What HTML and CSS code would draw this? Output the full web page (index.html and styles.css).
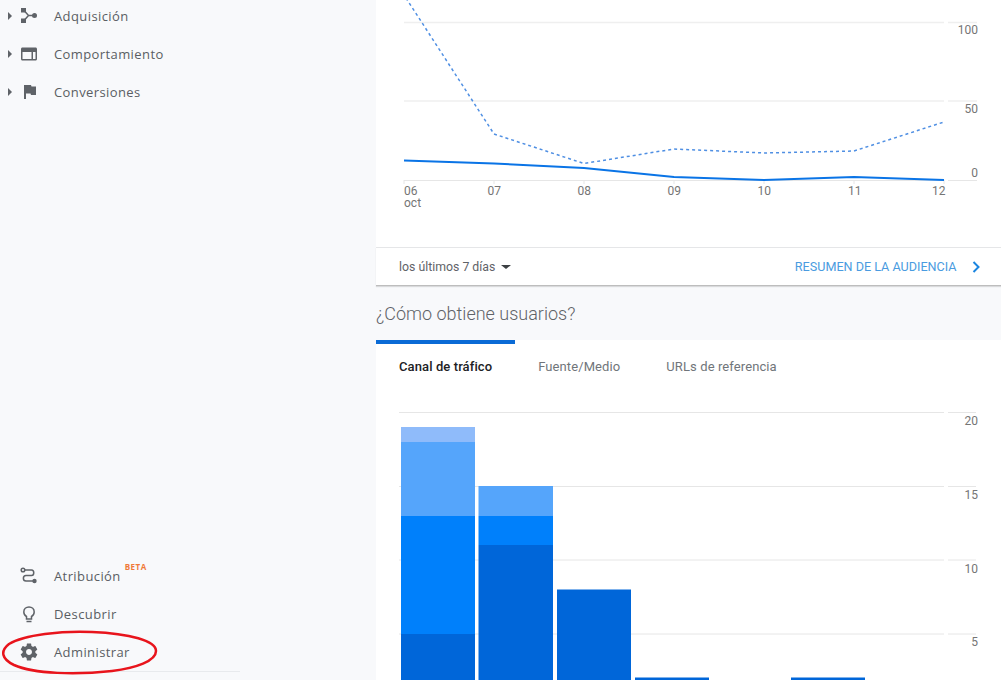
FILE: index.html
```html
<!DOCTYPE html>
<html lang="es">

<head>
    <meta charset="UTF-8">
    <title>Analytics</title>
    <link rel="stylesheet" href="styles.css">
</head>

<body>
    <aside class="sidebar">
        <nav class="nav-group nav-top">
            <a class="nav-item">
                <span class="caret"></span>
                <svg class="nav-icon" viewBox="0 0 24 24">
                    <rect x="4" y="4" width="5" height="4.500" />
                    <rect x="4" y="14.500" width="5" height="4.500" />
                    <circle cx="17.500" cy="11.500" r="2.500" />
                    <path class="line thin" d="M7.500 7l4 4.500H17M11.500 11.500l-4 4.500" />
                </svg>
                <span>Adquisición</span>
            </a>
            <a class="nav-item">
                <span class="caret"></span>
                <svg class="nav-icon" viewBox="0 0 24 24">
                    <path fill-rule="evenodd" d="M5.500 5.500h13c.9 0 1.500.6 1.500 1.500v10c0 .9-.6 1.500-1.500 1.500h-13c-.9 0-1.500-.6-1.500-1.500V7c0-.9.6-1.500 1.500-1.500zm0 4.500v7h9v-7h-9zm10.500 0v7h2.500v-7H16z" />
                </svg>
                <span>Comportamiento</span>
            </a>
            <a class="nav-item">
                <span class="caret"></span>
                <svg class="nav-icon" viewBox="0 0 24 24">
                    <path d="M7 5h7l.5 1.500H19V15h-5l-.5-1.500H9V19H7z" />
                </svg>
                <span>Conversiones</span>
            </a>
        </nav>

        <nav class="nav-group nav-bottom">
            <a class="nav-item">
                <svg class="nav-icon" viewBox="0 0 24 24">
                    <circle class="line thin" cx="6" cy="6" r="1.800" />
                    <circle cx="17.500" cy="17" r="2.200" />
                    <path class="line thin" d="M8 6h6.500c3 0 3 5.500 0 5.500H9c-3.500 0-3.500 5.500 0 5.500h7" />
                </svg>
                <span>Atribución</span>
                <sup class="beta">BETA</sup>
            </a>
            <a class="nav-item">
                <svg class="nav-icon" viewBox="0 0 24 24">
                    <path class="line thin" d="M9.500 14.500C7.500 13.300 6.800 11.500 6.800 10c0-3 2.300-5 5.200-5s5.200 2 5.200 5c0 1.500-.7 3.300-2.700 4.500V17h-5z" />
                    <path class="line thin" d="M9.500 19.500h5" />
                </svg>
                <span>Descubrir</span>
            </a>
            <a class="nav-item">
                <svg class="nav-icon" viewBox="0 0 24 24">
                    <path transform="translate(1.800 1.800) scale(.85)" d="M19.430 12.980c.04-.32.07-.64.07-.98s-.03-.66-.07-.98l2.110-1.650c.19-.15.24-.42.12-.64l-2-3.460c-.12-.22-.39-.3-.61-.22l-2.490 1c-.52-.4-1.080-.73-1.690-.98l-.38-2.650C14.460 2.180 14.250 2 14 2h-4c-.25 0-.46.18-.49.42l-.38 2.650c-.61.25-1.170.59-1.690.98l-2.490-1c-.23-.09-.49 0-.61.22l-2 3.460c-.13.22-.07.49.12.64l2.110 1.650c-.04.32-.07.65-.07.98s.03.66.07.98l-2.110 1.650c-.19.15-.24.42-.12.64l2 3.460c.12.22.39.3.61.22l2.490-1c.52.4 1.080.73 1.690.98l.38 2.650c.03.24.24.42.49.42h4c.25 0 .46-.18.49-.42l.38-2.650c.61-.25 1.170-.59 1.690-.98l2.490 1c.23.09.49 0 .61-.22l2-3.460c.12-.22.07-.49-.12-.64l-2.110-1.650zM12 15.500c-1.930 0-3.500-1.570-3.500-3.500s1.570-3.500 3.500-3.500 3.500 1.570 3.500 3.500-1.570 3.500-3.500 3.500z" />
                </svg>
                <span>Administrar</span>
            </a>
        </nav>

        <!-- red circle somebody drew over the screenshot -->
        <svg class="scribble" viewBox="0 0 158 46">
            <path d="M92 2C62 0.500 24 5 9 14 0 21 1.500 29 14 35c20 9 62 10 98 6 24-3 44-10 44-20C156 11 130 3.500 92 2z" />
        </svg>
    </aside>

    <main class="content">
        <section class="card">
            <svg class="line-chart" viewBox="0 0 624 247">
                <g class="grid soft">
                    <path d="M28 22.500H568M572 22.500H601" />
                    <path d="M28 101H568M572 101H601" />
                </g>
                <g class="grid">
                    <path d="M28 180.500H568M572 180.500H601" />
                    <path d="M28 180V184M118 180V184M208 180V184M298 180V184M388 180V184M478 180V184M568 180V184" />
                </g>
                <polyline class="dotted" points="30,-2 118,134 208,163.500 298,149 388,153 478,151 568,122" />
                <polyline class="solid" points="28,160.500 118,163.500 208,168 298,177 388,180 478,177 568,180" />
                <g class="axis-y">
                    <text x="602" y="34">100</text>
                    <text x="602" y="113">50</text>
                    <text x="602" y="177">0</text>
                </g>
                <g class="axis-x">
                    <text x="28" y="195">06</text>
                    <text x="28" y="207">oct</text>
                    <text x="111.500" y="195">07</text>
                    <text x="201.500" y="195">08</text>
                    <text x="291.500" y="195">09</text>
                    <text x="381.500" y="195">10</text>
                    <text x="472" y="195">11</text>
                    <text x="556" y="195">12</text>
                </g>
            </svg>
            <div class="card-footer">
                <span class="range">los últimos 7 días<i class="range-caret"></i></span>
                <a class="report-link">RESUMEN DE LA AUDIENCIA
                    <svg class="chevron" viewBox="0 0 8 12">
                        <path d="M1.500 1l5 5-5 5" />
                    </svg>
                </a>
            </div>
        </section>

        <h2 class="section-title">¿Cómo obtiene usuarios?</h2>

        <section class="card">
            <div class="tabs">
                <a class="tab active">Canal de tráfico</a>
                <a class="tab">Fuente/Medio</a>
                <a class="tab">URLs de referencia</a>
            </div>
            <svg class="bar-chart" viewBox="0 0 624 296">
                <g class="grid">
                    <path d="M23 28.500H568M572 28.500H600" />
                    <path d="M23 102.500H568M572 102.500H600" />
                    <path d="M23 176H568M572 176H600" />
                    <path d="M23 250H568M572 250H600" />
                </g>
                <rect class="s4" x="25" y="43" width="74" height="15" />
                <rect class="s3" x="25" y="58" width="74" height="74" />
                <rect class="s2" x="25" y="132" width="74" height="118" />
                <rect class="s1" x="25" y="250" width="74" height="46" />

                <rect class="s3" x="102.500" y="102" width="74.500" height="30" />
                <rect class="s2" x="102.500" y="132" width="74.500" height="29" />
                <rect class="s1" x="102.500" y="161" width="74.500" height="135" />

                <rect class="s1" x="181" y="205.500" width="74" height="90.500" />
                <rect class="s1" x="259" y="293.500" width="74" height="3" />
                <rect class="s1" x="415" y="293.500" width="74" height="3" />
                <g class="axis-y">
                    <text x="602" y="40.500">20</text>
                    <text x="602" y="114.500">15</text>
                    <text x="602" y="188.500">10</text>
                    <text x="602" y="261.500">5</text>
                </g>
            </svg>
        </section>
    </main>
</body>

</html>
```

FILE: styles.css
```css
html,
body {
    height: 680px;
    margin: 0;
    overflow: hidden;
}

body {
    display: flex;
    background-color: #f8f9fb;
    font-family: Roboto, "Liberation Sans", sans-serif;
}

a {
    color: inherit;
    text-decoration: none;
}

.sidebar {
    position: relative;
    display: flex;
    flex-direction: column;
    justify-content: space-between;
    flex: 0 0 376px;
    height: 680px;
    font-family: "Open Sans", sans-serif;
}

.nav-group {
    width: 240px;
}

.nav-top {
    margin-top: -3px;
}

.nav-bottom {
    margin-bottom: 8px;
    border-bottom: 1px solid #e8eaed;
}

.nav-item {
    display: flex;
    align-items: center;
    height: 38px;
    padding-left: 17px;
    font-size: 13px;
    font-weight: 500;
    letter-spacing: 0.4px;
    line-height: 36px;
    color: #5a5e63;
}

.caret {
    width: 0;
    height: 0;
    margin-left: -9px;
    margin-right: 5px;
    border-top: 4px solid transparent;
    border-bottom: 4px solid transparent;
    border-left: 4px solid #5f6368;
}

.nav-icon {
    flex: none;
    width: 24px;
    height: 24px;
    margin-right: 13px;
    fill: #5f6368;
}

.line {
    fill: none;
    stroke: #5f6368;
    stroke-width: 2;
}

.line.thin {
    stroke-width: 1.5;
}

.beta {
    align-self: flex-start;
    margin: 5px 0 0 4px;
    font-size: 8px;
    font-weight: 700;
    letter-spacing: 0.5px;
    line-height: 10px;
    color: #f07a3a;
}

.scribble {
    position: absolute;
    left: 0;
    top: 630px;
    width: 158px;
    height: 46px;
    fill: none;
    stroke: #e8141c;
    stroke-width: 2.5;
}

.content {
    flex: 1;
    min-width: 0;
}

.card {
    background-color: #fff;
}

.line-chart,
.bar-chart {
    display: block;
    width: 624px;
}

.line-chart {
    height: 247px;
}

.bar-chart {
    height: 296px;
}

.grid path {
    fill: none;
    stroke: #e6e6e6;
    stroke-width: 1;
}

.grid.soft path {
    stroke: #efefef;
    stroke-width: 1.5;
}

.dotted {
    fill: none;
    stroke: #4f8fe3;
    stroke-width: 1.5;
    stroke-dasharray: 3 3;
}

.solid {
    fill: none;
    stroke: #0a74e6;
    stroke-width: 2;
}

.axis-y text,
.axis-x text {
    font-size: 12px;
    fill: #757575;
}

.axis-y text {
    text-anchor: end;
}

.s1 {
    fill: #0066d9;
}

.s2 {
    fill: #0080fb;
}

.s3 {
    fill: #55a5fb;
}

.s4 {
    fill: #8fbbfa;
}

.card-footer {
    display: flex;
    align-items: center;
    justify-content: space-between;
    height: 37px;
    padding: 0 21.5px 0 23px;
    border-top: 1px solid #e5e6e8;
    border-bottom: 1px solid #bdbdbd;
    box-shadow: 0 1px 1px rgba(0, 0, 0, 0.12);
}

.range {
    display: flex;
    align-items: center;
    font-size: 12.3px;
    color: #5f6368;
}

.range-caret {
    width: 0;
    height: 0;
    margin-left: 6px;
    border-left: 5px solid transparent;
    border-right: 5px solid transparent;
    border-top: 4px solid #3c4043;
}

.report-link {
    display: flex;
    align-items: center;
    gap: 15px;
    font-size: 12.6px;
    color: #4a9be0;
}

.chevron {
    width: 8px;
    height: 12px;
    fill: none;
    stroke: #1a85e0;
    stroke-width: 2;
}

.section-title {
    height: 54px;
    margin: 0;
    font-size: 18px;
    font-weight: 300;
    line-height: 56px;
    color: #5f6368;
}

.tabs {
    display: flex;
    height: 44px;
    font-size: 13px;
    letter-spacing: 0.1px;
    color: #70757a;
}

.tab {
    padding: 0 23px;
    border-top: 4px solid transparent;
    line-height: 45px;
}

.tab.active {
    border-top-color: #0a6bd6;
    font-weight: 500;
    color: #202124;
}
```
